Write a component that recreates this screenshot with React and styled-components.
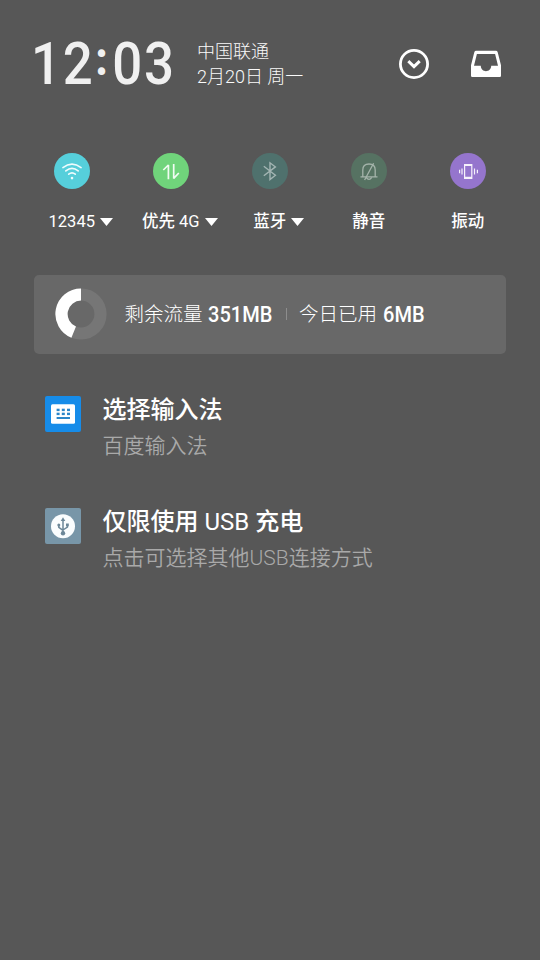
import React from 'react';
import styled, { createGlobalStyle } from 'styled-components';

const tiles = [
  { id: 'wifi', label: <Latin>12345</Latin>, color: '#56cfdb', menu: true, icon: <WifiIcon /> },
  { id: 'data', label: <>优先 <Latin>4G</Latin></>, color: '#70d47b', menu: true, icon: <DataIcon /> },
  { id: 'bluetooth', label: '蓝牙', color: '#4f716d', menu: true, icon: <BluetoothIcon /> },
  { id: 'mute', label: '静音', color: '#567262', icon: <MuteIcon /> },
  { id: 'vibrate', label: '振动', color: '#9575cd', icon: <VibrateIcon /> },
];

function App() {
  return (
    <Shade>
      <GlobalStyle />
      <Header>
        <Clock>12<Colon>:</Colon>03</Clock>
        <Status>
          <p>中国联通</p>
          <p>2月20日 周一</p>
        </Status>
        <Actions>
          <ExpandIcon />
          <TrayIcon />
        </Actions>
      </Header>

      <Tiles>
        {tiles.map((tile) => (
          <Tile key={tile.id}>
            <Round $color={tile.color}>{tile.icon}</Round>
            <TileLabel>
              <span>{tile.label}</span>
              {tile.menu && <Arrow />}
            </TileLabel>
          </Tile>
        ))}
      </Tiles>

      <Usage>
        <Donut />
        <UsageText>剩余流量</UsageText>
        <Amount $width={65}>351MB</Amount>
        <Divider />
        <UsageText>今日已用</UsageText>
        <Amount $width={43}>6MB</Amount>
      </Usage>

      <Notifications>
        <Notification>
          <AppIcon $color="#168ce9"><KeyboardIcon /></AppIcon>
          <div>
            <Title>选择输入法</Title>
            <Detail>百度输入法</Detail>
          </div>
        </Notification>
        <Notification>
          <AppIcon $color="#7896a8"><UsbIcon /></AppIcon>
          <div>
            <Title>仅限使用 <Latin>USB</Latin> 充电</Title>
            <Detail>点击可选择其他USB连接方式</Detail>
          </div>
        </Notification>
      </Notifications>
    </Shade>
  );
}

export default App;

function Latin({ children }) {
  return <LatinText>{children}</LatinText>;
}

function ExpandIcon() {
  return (
    <svg width="32" height="32" viewBox="0 0 32 32" fill="none" stroke="#fff">
      <circle cx="16" cy="16" r="13.6" strokeWidth="2.8" />
      <path d="M10.3 13.2L16 18.6L21.7 13.2" strokeWidth="3" />
    </svg>
  );
}

function TrayIcon() {
  return (
    <svg width="32" height="32" viewBox="0 0 32 32" fill="#fff">
      <path
        fillRule="evenodd"
        d="M6.2 2.8H25.8Q27.3 2.8 27.7 4.2L31 17.2V27.8Q31 29 29.8 29H2.2Q1 29 1 27.8V17.2L4.3 4.2Q4.7 2.8 6.2 2.8ZM6.9 6L4 17.8H10.8C10.8 25 21.2 25 21.2 17.8H28L25.1 6Z"
      />
    </svg>
  );
}

function WifiIcon() {
  return (
    <svg width="36" height="36" viewBox="0 0 36 36" fill="none" stroke="#effcfd" strokeWidth="1.6" strokeLinecap="round">
      <path d="M8.9 14.6Q18 7.6 27.1 14.6" />
      <path d="M11.8 17.9Q18 12.9 24.2 17.9" />
      <path d="M14.7 21.2Q18 18.4 21.3 21.2" />
      <circle cx="18" cy="25.1" r="1.3" fill="#effcfd" stroke="none" />
    </svg>
  );
}

function DataIcon() {
  return (
    <svg width="36" height="36" viewBox="0 0 36 36" fill="none" stroke="#f1fcf2" strokeWidth="1.7" strokeLinejoin="bevel">
      <path d="M10.3 17L15.4 12V26.2" />
      <path d="M20.7 11V25.4L25.8 20" />
    </svg>
  );
}

function BluetoothIcon() {
  return (
    <svg width="36" height="36" viewBox="0 0 36 36" fill="none" stroke="#a3b5b3" strokeWidth="1.4">
      <path d="M11.8 13.3L23.4 22.3L18 26.6V9.8L23.4 13.9L11.8 22.8" />
    </svg>
  );
}

function MuteIcon() {
  return (
    <svg width="36" height="36" viewBox="0 0 36 36" fill="none" stroke="#a5b4ab" strokeWidth="1.3">
      <path d="M9.5 23.8H26.5M11.8 23.8V17C11.8 13 14 11 18 11C22 11 24.2 13 24.2 17V23.8" />
      <path d="M15.2 24.3Q18 28.4 20.8 24.3M22.6 10.2L13.6 27" />
    </svg>
  );
}

function VibrateIcon() {
  return (
    <svg width="36" height="36" viewBox="0 0 36 36" fill="none" stroke="#f6f1fb" strokeWidth="1.2">
      <path d="M14.6 11.5H21.8V25.3H14.6Z M14.6 12.4H21.8M14.6 24.4H21.8" />
      <path d="M12 15.5V21.6M24.5 15.5V21.6M9.6 16.8V20.2M27.4 16.8V20.2" />
    </svg>
  );
}

function Arrow() {
  return (
    <ArrowSvg width="13" height="8" viewBox="0 0 13 8" fill="#fff">
      <path d="M0 0H13L6.5 8Z" />
    </ArrowSvg>
  );
}

function Donut() {
  return (
    <DonutSvg width="52" height="52" viewBox="0 0 52 52" fill="none" strokeWidth="12.2">
      <circle cx="26" cy="26" r="19.5" stroke="#767676" />
      <path d="M26 6.5A19.5 19.5 0 0 0 18.7 44.08" stroke="#fff" />
    </DonutSvg>
  );
}

function KeyboardIcon() {
  return (
    <svg width="36" height="36" viewBox="0 0 36 36">
      <rect x="6" y="8.3" width="24" height="19.4" rx="1.5" fill="#fff" />
      <g fill="#2b86c9">
        {[11.6, 16.8, 22].map((x) => (
          <React.Fragment key={x}>
            <rect x={x} y="12.7" width="3" height="2.4" />
            <rect x={x} y="16.7" width="3" height="2.4" />
          </React.Fragment>
        ))}
        <rect x="11.6" y="21" width="13.4" height="2" />
      </g>
    </svg>
  );
}

function UsbIcon() {
  return (
    <svg width="36" height="36" viewBox="0 0 36 36">
      <circle cx="18" cy="18.2" r="12" fill="#fafdfe" />
      <g fill="none" stroke="#6c8798" strokeWidth="1.5">
        <path d="M18 11V25M13.8 17.5V19.4L18 22.4M22.4 17.5V19L18 22" />
      </g>
      <g fill="#6c8798">
        <path d="M18 9.2L20.3 13H15.7Z" />
        <circle cx="13.8" cy="17" r="1.5" />
        <rect x="21" y="15.5" width="2.8" height="2.8" />
        <circle cx="18" cy="25.2" r="2.2" />
      </g>
    </svg>
  );
}

const GlobalStyle = createGlobalStyle`
  * {
    box-sizing: border-box;
  }

  body {
    margin: 0;
    background: #575757;
  }

  p, h2 {
    margin: 0;
  }

  svg {
    display: block;
    flex-shrink: 0;
  }
`;

const Shade = styled.main`
  width: 540px;
  height: 960px;
  overflow: hidden;
  background: #575757;
  color: #fff;
  font-family: Roboto, 'Noto Sans CJK SC', sans-serif;
`;

const Header = styled.header`
  display: flex;
  align-items: center;
  height: 127px;
  padding: 0 38px 0 30.5px;
`;

const Clock = styled.div`
  width: 166.5px;
  color: #f0f0f0;
  font-size: 60px;
  font-weight: 500;
  letter-spacing: 2px;
  line-height: 60px;
  white-space: nowrap;
  transform: scaleX(0.88);
  transform-origin: left;
`;

const Colon = styled.span`
  display: inline-block;
  width: 20px;
  font-size: 46px;
  font-weight: 900;
  letter-spacing: 0;
  line-height: 44px;
  text-indent: 1px;
  vertical-align: 9px;
`;

const Status = styled.div`
  color: #fafafa;
  font-size: 18px;
  font-weight: 300;
  line-height: 25px;
`;

const Actions = styled.div`
  display: flex;
  gap: 40px;
  margin-left: auto;
`;

const Tiles = styled.section`
  display: grid;
  grid-template-columns: repeat(5, 99px);
  padding: 26px 0 0 22.5px;
`;

const Tile = styled.div`
  display: flex;
  flex-direction: column;
  align-items: center;
`;

const Round = styled.div`
  width: 36px;
  height: 36px;
  border-radius: 50%;
  background: ${({ $color }) => $color};
`;

const TileLabel = styled.div`
  display: flex;
  align-items: center;
  height: 24px;
  margin: 21px 0.5px 0 0;
  font-size: 16.5px;
  font-weight: 500;
  line-height: 24px;
  white-space: pre;
`;

const LatinText = styled.span`
  font-weight: 400;
`;

/* the arrow hangs outside so the text stays centred under the circle */
const ArrowSvg = styled.svg`
  margin: 0 -18px 0 5px;
`;

const Usage = styled.section`
  display: flex;
  align-items: center;
  height: 79px;
  margin: 40.5px 34px 0;
  padding-left: 21px;
  border-radius: 5px;
  background: #686868;
`;

const DonutSvg = styled.svg`
  margin-right: 17.5px;
`;

const UsageText = styled.span`
  margin: 2px 5.5px 0 0;
  font-size: 19.5px;
  font-weight: 300;
  line-height: 28px;
`;

const Amount = styled.span`
  width: ${({ $width }) => $width}px;
  margin-top: 1px;
  font-size: 22px;
  font-weight: 500;
  line-height: 28px;
  white-space: nowrap;
  transform: scaleX(0.91);
  transform-origin: left;
`;

const Divider = styled.i`
  width: 1px;
  height: 12px;
  margin: 0 12.5px;
  background: #8d8d8d;
`;

const Notifications = styled.section`
  padding: 39px 45px 0;
`;

const Notification = styled.article`
  display: flex;
  gap: 21.5px;
  height: 112px;
  padding-top: 3px;
`;

const AppIcon = styled.div`
  flex-shrink: 0;
  width: 36px;
  height: 36px;
  border-radius: 2px;
  background: ${({ $color }) => $color};
`;

const Title = styled.h2`
  margin-top: -4px;
  font-size: 24px;
  font-weight: 500;
  line-height: 36px;
`;

const Detail = styled.p`
  margin-top: 2.5px;
  color: #a9a9a9;
  font-size: 21px;
  font-weight: 350;
  line-height: 32px;
`;
